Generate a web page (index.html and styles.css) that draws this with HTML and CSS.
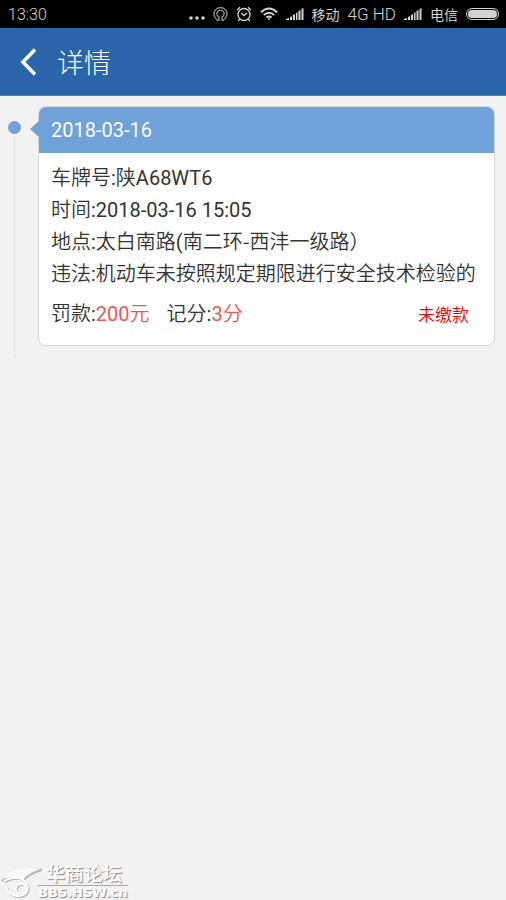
FILE: index.html
```html
<!DOCTYPE html>
<html lang="zh-CN">
<head>
<meta charset="utf-8">
<meta name="viewport" content="width=device-width, initial-scale=1">
<title>详情</title>
<link rel="stylesheet" href="styles.css">
</head>
<body>
<div class="status">
  <span class="clock">13:30</span>
  <div class="indicators">
    <svg width="16" height="20" viewBox="0 0 16 20" fill="#d2d2d2"><circle cx="2" cy="14" r="1.8"/><circle cx="8" cy="14" r="1.8"/><circle cx="14" cy="14" r="1.8"/></svg>
    <svg width="15" height="16" viewBox="0 0 15 16" fill="none" stroke="#8c8c8c" stroke-width="1.4"><path d="M4.500 13.800a6.500 6.500 0 1 1 6 0"/><path d="M4 14.300h2V11a3.600 3.600 0 1 1 3 0v3.300h2"/></svg>
    <svg width="16" height="16" viewBox="0 0 16 16" fill="none" stroke="#d2d2d2" stroke-width="1.4"><circle cx="8" cy="8.5" r="6"/><path d="M5.3 7l2.7 2.6L11.2 7M1 4l3-2.8M15 4l-3-2.8M3.7 13.2L2.2 15M12.3 13.2l1.5 1.8"/></svg>
    <svg width="18" height="14" viewBox="0 0 18 14" fill="none" stroke="#d2d2d2" stroke-width="1.9"><path d="M1 5.2q8-7.4 16 0M3.8 8q5.2-4.6 10.4 0M6.4 10.5q2.6-2 5.2 0"/><circle cx="9" cy="12" r="1" fill="#d2d2d2" stroke="none"/></svg>
    <svg width="18" height="12" viewBox="0 0 18 12" fill="#d2d2d2"><path d="M0 12v-1l3-1v2zM4 12V9l2-1v4zM7 12V7l2-1v6zM10 12V5l1.5-1v8zM12.500 12V3l2-1v10zM15.500 12V1l2-1v12z"/></svg>
    <span class="carrier">移动</span>
    <span class="network">4G HD</span>
    <svg width="18" height="12" viewBox="0 0 18 12" fill="#d2d2d2"><path d="M0 12v-1l3-1v2zM4 12V9l2-1v4zM7 12V7l2-1v6zM10 12V5l1.500-1v8zM12.500 12V3l2-1v10zM15.500 12V1l2-1v12z"/></svg>
    <span class="carrier">电信</span>
    <svg width="33" height="12" viewBox="0 0 33 12"><rect x=".5" y=".5" width="32" height="11" rx="5.500" fill="none" stroke="#d2d2d2"/><rect x="2" y="2" width="29" height="8" rx="4" fill="#d2d2d2"/></svg>
  </div>
</div>
<header class="topbar">
  <button class="back" type="button" aria-label="返回"><svg width="17" height="28" viewBox="0 0 17 28" fill="none" stroke="#fff" stroke-width="3.600"><path d="M15 1.500L3 14l12 12.500"/></svg></button>
  <h1 class="title">详情</h1>
</header>
<main class="timeline">
  <div class="rail"><span class="dot"></span><span class="line"></span></div>
  <article class="card">
    <h2 class="date">2018-03-16</h2>
    <div class="details">
      <p><span class="cjk">车牌号</span>:<span class="cjk">陕</span>A68WT6</p>
      <p><span class="cjk">时间</span>:2018-03-16 15:05</p>
      <p><span class="cjk">地点</span>:<span class="cjk">太白南路</span>(<span class="cjk">南二环-西沣一级路）</span></p>
      <p><span class="cjk">违法</span>:<span class="cjk">机动车未按照规定期限进行安全技术检验的</span></p>
      <div class="summary">
        <span><span class="cjk">罚款</span>:<b>200<span class="cjk">元</span></b></span>
        <span><span class="cjk">记分</span>:<b>3<span class="cjk">分</span></b></span>
        <strong class="unpaid">未缴款</strong>
      </div>
    </div>
  </article>
</main>
<footer class="watermark">
  <svg width="44" height="36" viewBox="0 0 44 36" fill="none"><g stroke="#b4b4b4" transform="translate(1 1)"><path d="M1 16Q14 0 41 5Q29 8 23 15" stroke-width="2"/><path d="M4 17Q20 9 27 20Q30 30 20 32Q8 32 6 22" stroke-width="2"/><circle cx="21" cy="25" r="5" stroke-width="2"/></g><path d="M1 16Q14 0 41 5Q29 8 23 15Q13 9 1 16Z" fill="#fafafa"/><g stroke="#fff" stroke-width="2"><path d="M4 17Q20 9 27 20Q30 30 20 32Q8 32 6 22"/><circle cx="21" cy="25" r="5"/></g></svg>
  <div class="forum"><span class="forum-name">华商论坛</span><span class="forum-url">BBS.HSW.cn</span></div>
</footer>
</body>
</html>
```
FILE: styles.css
```css
* { box-sizing: border-box; }
body {
  margin: 0;
  min-height: 100vh;
  display: flex;
  flex-direction: column;
  background: #f2f2f2;
  color: #333;
  font-family: Roboto, "Noto Sans CJK SC", sans-serif;
  font-size: 20px;
}
h1, h2, p { margin: 0; font-weight: 400; }
svg { display: block; }
.cjk, .unpaid {
  font-family: "Noto Sans CJK SC DemiLight", "Noto Sans CJK SC", sans-serif;
  font-weight: 350;
}
.cjk { line-height: 1; }
.status {
  height: 28px;
  padding: 0 7px 0 8px;
  display: flex;
  align-items: center;
  justify-content: space-between;
  background: #000;
  color: #d2d2d2;
  font-size: 16px;
}
.clock { font-weight: 300; }
.indicators { display: flex; align-items: center; gap: 8px; }
.carrier { font-size: 14px; }
.network { font-size: 17px; font-weight: 300; }
.topbar {
  height: 68px;
  padding-left: 20px;
  display: flex;
  align-items: center;
  gap: 20px;
  background: #2b65a9;
  border-bottom: 1px solid #4680c4;
}
.back { padding: 0; border: 0; background: none; }
.title { color: #fff; font-size: 27px; font-weight: 300; }
.timeline { display: flex; padding: 10px 11px 0 8px; }
.rail {
  width: 13px;
  margin: 15px 17px -12px 0;
  display: flex;
  flex-direction: column;
  align-items: center;
}
.dot { width: 13px; height: 13px; border-radius: 50%; background: #70a1d9; }
.line { width: 1px; flex: 1; margin-top: 2px; background: #d9e2e8; }
.card {
  position: relative;
  flex: 1;
  min-width: 0;
  border: 1px solid #d6d6d6;
  border-radius: 8px;
  background: #fff;
}
.card::before {
  content: "";
  position: absolute;
  left: -9px;
  top: 14px;
  border: solid transparent;
  border-width: 8px 9px 8px 0;
  border-right-color: #70a1d9;
}
.date {
  height: 46px;
  padding-left: 12px;
  border-radius: 7px 7px 0 0;
  background: #70a1d9;
  color: #fff;
  font-size: 20px;
  line-height: 46px;
}
.details { padding: 9px 0 15px 12px; line-height: 32px; white-space: nowrap; }
.summary { display: flex; gap: 17px; margin-top: 8px; padding-right: 25px; }
.summary b { color: #f25555; font-weight: 400; }
.unpaid { margin-left: auto; color: #f00; font-size: 17px; }
.watermark {
  margin-top: auto;
  display: flex;
  align-items: flex-end;
  color: #fff;
  text-shadow: 1px 1px 1px #888;
}
.forum { display: flex; flex-direction: column; margin-left: -6px; }
.forum-name {
  padding-left: 8px;
  border-bottom: 1px solid #aaa;
  font-size: 19px;
  font-weight: 500;
  line-height: 20px;
}
.forum-url {
  font-family: "DejaVu Sans", sans-serif;
  font-size: 13px;
  font-weight: 700;
  line-height: 14px;
}
```
